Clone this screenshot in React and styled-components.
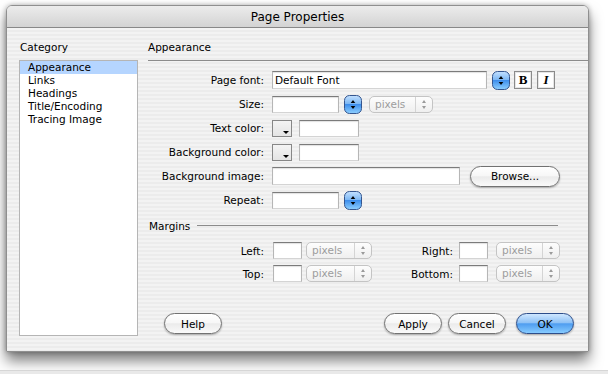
import React from 'react'
import styled, { createGlobalStyle } from 'styled-components'

const GlobalStyle = createGlobalStyle`
  html, body {
    margin: 0;
    padding: 0;
    background: #fff;
  }
  body {
    font-family: "DejaVu Sans", "Liberation Sans", sans-serif;
    font-size: 10.5px;
    color: #000;
  }
`;

const Page = styled.div`
  height: 374px;
  display: flex;
  flex-direction: column;
  overflow: hidden;
`;

const Window = styled.div`
  margin: 5px 0 0 6px;
  width: 583px;
  height: 347px;
  box-sizing: border-box;
  display: flex;
  flex-direction: column;
  border: 1px solid #8f8f8f;
  border-radius: 6px 6px 0 0;
  background: repeating-linear-gradient(to bottom, #ececec 0 2px, #f3f3f3 2px 4px);
  box-shadow: 0 9px 14px rgba(0, 0, 0, 0.5), 0 0 5px rgba(0, 0, 0, 0.3);
  overflow: hidden;
`;

const TitleBar = styled.div`
  height: 21px;
  flex: none;
  display: flex;
  align-items: center;
  justify-content: center;
  font-size: 12px;
  background: linear-gradient(to bottom, #ececec, #d3d3d3);
  border-bottom: 1px solid #888;
`;

const Body = styled.div`
  flex: 1;
  display: flex;
  padding: 12px 0 15px 12px;
  min-height: 0;
`;

const Sidebar = styled.div`
  width: 119px;
  flex: none;
  display: flex;
  flex-direction: column;
`;

const SectionLabel = styled.div`
  line-height: 14px;
  padding-left: 1px;
  margin-bottom: 6px;
`;

const ListBox = styled.div`
  flex: 1;
  background: #fff;
  border: 1px solid #b5b5b5;
`;

const ListItem = styled.div`
  height: 13px;
  line-height: 13px;
  padding-left: 8px;
  background: ${p => (p.$selected ? '#b5d5ff' : 'transparent')};
`;

const Main = styled.div`
  flex: 1;
  margin-left: 10px;
  display: flex;
  flex-direction: column;
`;

const Heading = styled.div`
  line-height: 14px;
  padding-bottom: 6px;
  border-bottom: 1px solid #8c8c8c;
`;

const Form = styled.div`
  margin-top: 7px;
`;

const Row = styled.div`
  display: flex;
  align-items: center;
  height: ${p => p.$h || 24}px;
`;

const Label = styled.div`
  width: ${p => p.$w || 116}px;
  flex: none;
  text-align: right;
  margin-right: ${p => (p.$gap != null ? p.$gap : 8)}px;
  white-space: nowrap;
`;

const TextField = styled.div`
  width: ${p => p.$w}px;
  height: ${p => p.$h || 17}px;
  box-sizing: border-box;
  flex: none;
  margin-left: ${p => p.$ml || 0}px;
  background: #fff;
  border: 1px solid;
  border-color: #7b7b7b #b6b6b6 #d4d4d4 #b6b6b6;
  box-shadow: inset 0 1px 1px rgba(0, 0, 0, 0.12);
  padding-left: 2px;
  line-height: ${p => (p.$h || 17) - 2}px;
  font-size: 10.5px;
`;

const StepperBox = styled.div`
  flex: none;
  width: 18px;
  height: 19px;
  margin-left: ${p => p.$ml || 5}px;
  display: flex;
`;

const Stepper = ({ ml }) => (
  <StepperBox $ml={ml}>
    <svg width="18" height="19" viewBox="0 0 18 19">
      <defs>
        <linearGradient id="aquaBlue" x1="0" y1="0" x2="0" y2="1">
          <stop offset="0" stopColor="#c4e1ff" />
          <stop offset="0.45" stopColor="#7eb8f4" />
          <stop offset="0.5" stopColor="#3f8fec" />
          <stop offset="1" stopColor="#8ed0ff" />
        </linearGradient>
      </defs>
      <rect x="0.5" y="0.5" width="17" height="18" rx="5" fill="url(#aquaBlue)" stroke="#35568f" />
      <path d="M9 5 L11.3 8 L6.7 8 Z" fill="#000" />
      <path d="M9 14 L11.3 11 L6.7 11 Z" fill="#000" />
    </svg>
  </StepperBox>
);

const PopupBox = styled.div`
  flex: none;
  width: ${p => p.$w}px;
  height: 17px;
  box-sizing: border-box;
  margin-left: ${p => p.$ml || 0}px;
  display: flex;
  border: 1px solid #c4c4c4;
  border-radius: 5px;
  background: linear-gradient(to bottom, #fdfdfd, #efefef);
  color: #9d9d9d;
`;

const PopupText = styled.div`
  flex: 1;
  padding-left: 5px;
  line-height: 15px;
`;

const PopupArrows = styled.div`
  width: 16px;
  flex: none;
  border-left: 1px solid #d4d4d4;
  display: flex;
  align-items: center;
  justify-content: center;
`;

const Popup = ({ w, ml }) => (
  <PopupBox $w={w} $ml={ml}>
    <PopupText>pixels</PopupText>
    <PopupArrows>
      <svg width="6" height="11" viewBox="0 0 6 11">
        <path d="M3 1 L5 4 L1 4 Z" fill="#9a9a9a" />
        <path d="M3 10 L5 7 L1 7 Z" fill="#9a9a9a" />
      </svg>
    </PopupArrows>
  </PopupBox>
);

const Swatch = styled.div`
  flex: none;
  position: relative;
  width: 20px;
  height: 17px;
  box-sizing: border-box;
  border: 1px solid #878787;
  background: linear-gradient(to bottom, #f4f4f4, #e4e4e4);

  &::after {
    content: '';
    position: absolute;
    right: 2px;
    bottom: 2px;
    border-left: 3px solid transparent;
    border-right: 3px solid transparent;
    border-top: 3px solid #000;
  }
`;

const StyleButton = styled.div`
  flex: none;
  width: 18px;
  height: 18px;
  box-sizing: border-box;
  margin-left: ${p => p.$ml || 0}px;
  border: 1px solid #8a8a8a;
  background: #fff;
  box-shadow: inset 0 0 0 1px #e6e6e6;
  display: flex;
  align-items: center;
  justify-content: center;
  font-family: "Liberation Serif", "DejaVu Serif", serif;
  font-size: 13px;
  font-weight: bold;
  font-style: ${p => (p.$italic ? 'italic' : 'normal')};
`;

const MarginsHeader = styled.div`
  display: flex;
  align-items: center;
  height: 27px;
  padding-left: 1px;
`;

const Rule = styled.div`
  width: 361px;
  margin-left: 7px;
  border-top: 1px solid #8c8c8c;
`;

const ButtonBar = styled.div`
  margin-top: auto;
  display: flex;
  align-items: center;
  padding: 0 14px 2px 16px;
`;

const Spacer = styled.div`
  flex: 1;
`;

const AquaButton = styled.div`
  flex: none;
  width: ${p => p.$w || 58}px;
  height: 21px;
  box-sizing: border-box;
  margin-left: ${p => p.$ml || 0}px;
  border-radius: 11px;
  display: flex;
  align-items: center;
  justify-content: center;
  font-size: 10.5px;
  border: 1px solid ${p => (p.$primary ? '#2c4d8a' : '#727272')};
  background: ${p =>
    p.$primary
      ? 'linear-gradient(to bottom, #cfe7ff 0%, #8fc2f6 45%, #4f9df0 52%, #86cbff 100%)'
      : 'linear-gradient(to bottom, #ffffff 0%, #f7f7f7 45%, #ebebeb 52%, #fafafa 100%)'};
  box-shadow: 0 1px 2px rgba(0, 0, 0, 0.3);
`;

const BottomStrip = styled.div`
  margin-top: auto;
  height: 3px;
  background: #e9e9e9;
  border-top: 1px solid #d6d6d6;
`;

const categories = ['Appearance', 'Links', 'Headings', 'Title/Encoding', 'Tracing Image'];

export default function App() {
  return (
    <Page>
      <GlobalStyle />
      <Window>
        <TitleBar>Page Properties</TitleBar>
        <Body>
          <Sidebar>
            <SectionLabel>Category</SectionLabel>
            <ListBox>
              {categories.map((c, i) => (
                <ListItem key={c} $selected={i === 0}>{c}</ListItem>
              ))}
            </ListBox>
          </Sidebar>
          <Main>
            <Heading>Appearance</Heading>
            <Form>
              <Row>
                <Label>Page font:</Label>
                <TextField $w={215} $h={18}>Default Font</TextField>
                <Stepper />
                <StyleButton $ml={4}>B</StyleButton>
                <StyleButton $ml={5} $italic>I</StyleButton>
              </Row>
              <Row>
                <Label>Size:</Label>
                <TextField $w={67} />
                <Stepper />
                <Popup w={64} ml={7} />
              </Row>
              <Row>
                <Label>Text color:</Label>
                <Swatch />
                <TextField $w={60} $ml={7} />
              </Row>
              <Row>
                <Label>Background color:</Label>
                <Swatch />
                <TextField $w={60} $ml={7} />
              </Row>
              <Row>
                <Label>Background image:</Label>
                <TextField $w={188} $h={18} />
                <AquaButton $w={90} $ml={10}>Browse...</AquaButton>
              </Row>
              <Row>
                <Label>Repeat:</Label>
                <TextField $w={67} />
                <Stepper />
              </Row>
            </Form>
            <MarginsHeader>
              Margins
              <Rule />
            </MarginsHeader>
            <Row $h={23}>
              <Label $gap={9}>Left:</Label>
              <TextField $w={29} />
              <Popup w={66} ml={4} />
              <Label $w={81} $gap={6}>Right:</Label>
              <TextField $w={29} />
              <Popup w={64} ml={8} />
            </Row>
            <Row $h={23}>
              <Label $gap={9}>Top:</Label>
              <TextField $w={29} />
              <Popup w={66} ml={4} />
              <Label $w={81} $gap={6}>Bottom:</Label>
              <TextField $w={29} />
              <Popup w={64} ml={8} />
            </Row>
            <ButtonBar>
              <AquaButton>Help</AquaButton>
              <Spacer />
              <AquaButton>Apply</AquaButton>
              <AquaButton $ml={6}>Cancel</AquaButton>
              <AquaButton $ml={10} $primary>OK</AquaButton>
            </ButtonBar>
          </Main>
        </Body>
      </Window>
      <BottomStrip />
    </Page>
  );
}
